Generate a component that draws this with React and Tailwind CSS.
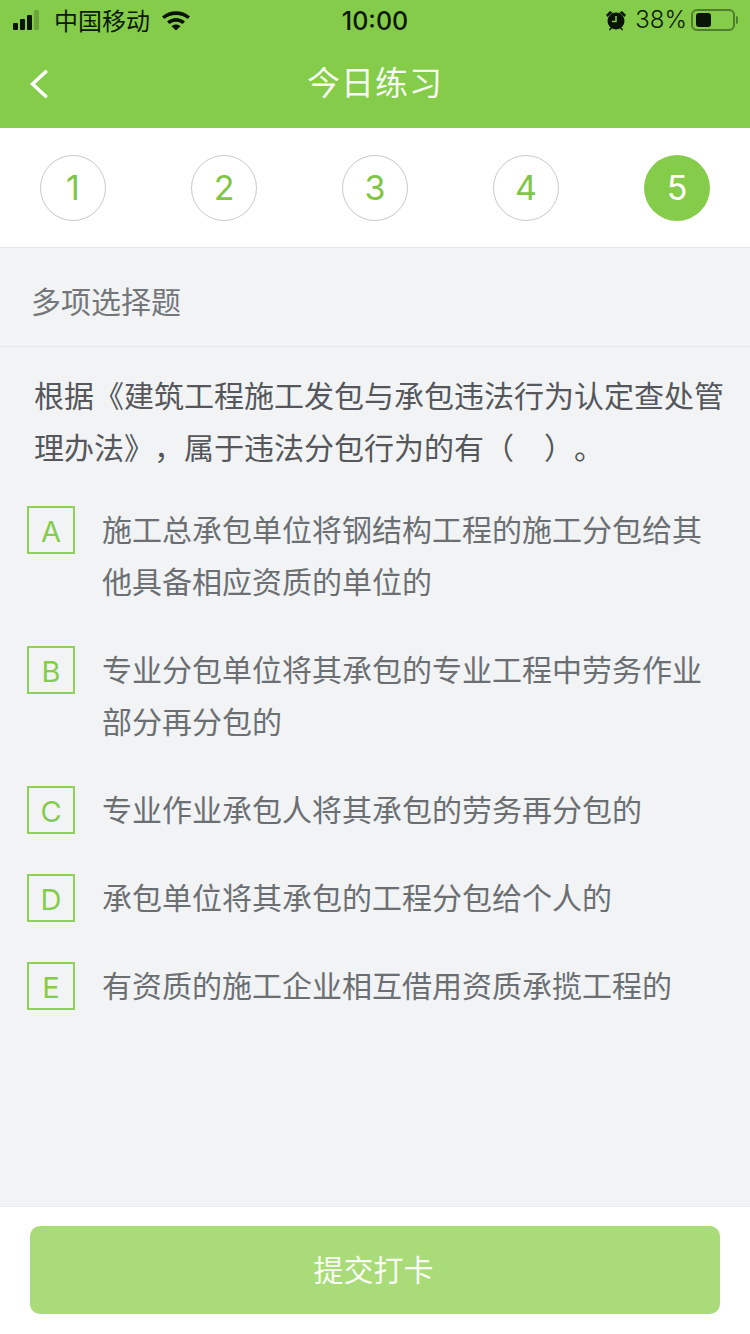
const font = { fontFamily: '"Noto Sans CJK SC", sans-serif' };

const steps = [1, 2, 3, 4, 5];

const options = [
  { key: "A", text: "施工总承包单位将钢结构工程的施工分包给其他具备相应资质的单位的" },
  { key: "B", text: "专业分包单位将其承包的专业工程中劳务作业部分再分包的" },
  { key: "C", text: "专业作业承包人将其承包的劳务再分包的" },
  { key: "D", text: "承包单位将其承包的工程分包给个人的" },
  { key: "E", text: "有资质的施工企业相互借用资质承揽工程的" },
];

function StatusBar() {
  return (
    <div className="relative flex h-10 items-center text-[#0c1a05]">
      <div className="flex items-end gap-[2px] pl-[13px] pb-[1px]">
        <span className="h-[7px] w-[5px] rounded-[1px] bg-[#0a1404]" />
        <span className="h-[11px] w-[5px] rounded-[1px] bg-[#0a1404]" />
        <span className="h-[15px] w-[5px] rounded-[1px] bg-[#0a1404]" />
        <span className="h-[20px] w-[5px] rounded-[1px] bg-[#6ba63c]" />
      </div>
      <span className="ml-[15px] text-[24px] leading-none">中国移动</span>
      <svg className="ml-[11px]" width="30" height="22" viewBox="0 0 30 22">
        <path d="M1 7.5C8.5 .5 21.5 .5 29 7.5l-2.4 2.6C20.500 4.500 9.500 4.500 3.400 10.100z" fill="#0a1404" />
        <path d="M6 12.500c5-4.700 13-4.700 18 0l-2.500 2.600c-3.700-3.300-9.300-3.300-13 0z" fill="#0a1404" />
        <path d="M10.500 17.200c2.600-2.300 6.400-2.300 9 0L15 21.500z" fill="#0a1404" />
      </svg>
      <span className="absolute left-0 right-0 top-[7px] text-center text-[25px] font-medium leading-[28px]" style={{ fontFamily: "Inter, sans-serif" }}>
        10:00
      </span>
      <div className="ml-auto flex items-center pr-[12px]">
        <svg width="22" height="24" viewBox="0 0 22 24">
          <circle cx="11" cy="13" r="8.500" fill="#0a1404" />
          <path d="M1 7l4-4 2.500 1.500L2.500 9zM21 7l-4-4-2.500 1.500L19.500 9z" fill="#0a1404" />
          <path d="M4.500 22l2-2.500M17.500 22l-2-2.500" stroke="#0a1404" strokeWidth="1.500" />
          <path d="M11 8v5.500H7" fill="none" stroke="#86cc4b" strokeWidth="1.500" />
        </svg>
        <span className="ml-[8px] text-[24px] leading-none" style={{ fontFamily: "Inter, sans-serif", fontWeight: 300 }}>
          38%
        </span>
        <div className="ml-[4px] flex h-[22px] w-[44px] items-center rounded-[6px] border-2 border-[#4f7f2c] pl-[3px]">
          <span className="h-[14px] w-[15px] rounded-[3px] bg-[#0a1404]" />
        </div>
        <span className="ml-[1px] h-[8px] w-[2px] rounded-r-sm bg-[#4f7f2c]" />
      </div>
    </div>
  );
}

function NavBar() {
  return (
    <div className="relative flex h-[88px] items-center justify-center pb-[5px]">
      <svg className="absolute left-[27px] top-[26px]" width="24" height="36" viewBox="0 0 24 36">
        <path d="M18.500 6L5.500 18l13 12" fill="none" stroke="#fff" strokeWidth="3.500" strokeLinecap="square" />
      </svg>
      <h1 className="text-[33px] font-normal leading-none tracking-[1px] text-white/95">今日练习</h1>
    </div>
  );
}

export default function App() {
  return (
    <div className="flex h-[1334px] w-[750px] flex-col overflow-hidden bg-[#f1f3f5]" style={font}>
      <div className="bg-[#86cc4b]">
        <StatusBar />
        <NavBar />
      </div>

      <div className="flex h-[120px] items-center justify-between border-b border-[#e6e7e8] bg-white px-10">
        {steps.map((n) =>
          n === 5 ? (
            <div key={n} className="flex h-[66px] w-[66px] items-center justify-center rounded-full bg-[#86cc4b] text-[34px] text-white" style={{ fontFamily: "Inter, sans-serif" }}>
              {n}
            </div>
          ) : (
            <div key={n} className="flex h-[66px] w-[66px] items-center justify-center rounded-full border border-[#c9c9c9] text-[34px] text-[#7fc646]" style={{ fontFamily: "Inter, sans-serif" }}>
              {n}
            </div>
          )
        )}
      </div>

      <div className="flex h-[99px] items-center border-b border-[#e4e6e8] pt-[5px] pl-[31px] text-[30px] leading-none text-[#747679]">
        多项选择题
      </div>

      <div className="flex-1 pt-[21px]">
        <p className="pl-[34px] pr-[26px] text-[30px] leading-[52px] text-[#55575a] [text-spacing-trim:space-all]">
          根据《建筑工程施工发包与承包违法行为认定查处管理办法》，属于违法分包行为的有（　）。
        </p>

        <div className="mt-[34px] flex flex-col gap-9 pl-[27px] pr-[48px]">
          {options.map((o) => (
            <div key={o.key} className="flex items-start">
              <span className="flex h-[48px] w-[48px] shrink-0 items-center justify-center border-2 border-[#8fd05a] pt-[3px] text-[29px] text-[#86cc4b]" style={{ fontFamily: "Inter, sans-serif" }}>
                {o.key}
              </span>
              <p className="-mt-[4px] ml-[27px] pb-[4px] text-[30px] leading-[52px] text-[#6c6f72]">{o.text}</p>
            </div>
          ))}
        </div>
      </div>

      <div className="h-[128px] border-t border-[#e8eaec] bg-white px-[30px] pt-[19px]">
        <button className="flex h-[88px] w-full items-center justify-center rounded-[10px] bg-[#a9dc78] pb-[4px] pr-[3px] text-[30px] leading-none text-white/95">
          提交打卡
        </button>
      </div>
    </div>
  );
}
